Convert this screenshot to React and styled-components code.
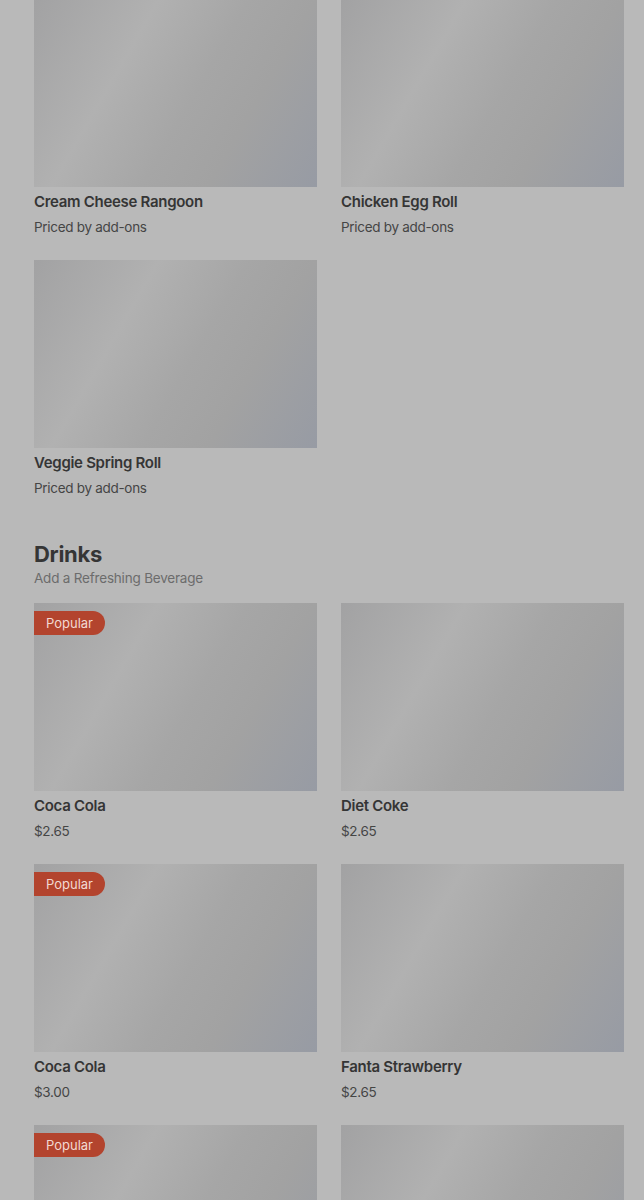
import React from "react";
import styled, { createGlobalStyle } from "styled-components";

const Global = createGlobalStyle`
  html, body { margin: 0; padding: 0; background: #b9b9b9; }
  body { font-family: Inter, "Noto Sans", "DejaVu Sans", sans-serif; -webkit-font-smoothing: antialiased; }
`;

const Page = styled.main`
  padding: 0 20px 0 34px;
  box-sizing: border-box;
  width: 644px;
  height: 1200px;
  overflow: hidden;
`;

const Section = styled.section`
  display: flex;
  flex-direction: column;
  margin-top: ${(p) => p.$top || 0}px;
`;

const SectionTitle = styled.h2`
  margin: 0;
  font-size: 22px;
  line-height: 28px;
  font-weight: 700;
  color: #353535;
  letter-spacing: -0.3px;
`;

const SectionSub = styled.p`
  margin: 0 0 15px;
  font-size: 13.5px;
  line-height: 20px;
  color: #6c6c6c;
  letter-spacing: -0.2px;
`;

const Grid = styled.div`
  display: grid;
  grid-template-columns: 283px 283px;
  column-gap: 24px;
  row-gap: 23px;
`;

const Card = styled.article`
  display: flex;
  flex-direction: column;
`;

const Thumb = styled.div`
  position: relative;
  height: 188px;
  background: linear-gradient(
    120deg,
    #a2a2a3 0%,
    #b1b1b1 32%,
    #a6a6a6 55%,
    #a2a2a2 72%,
    #979ba4 100%
  );
`;

const Badge = styled.span`
  position: absolute;
  top: 8px;
  left: 0;
  height: 24px;
  padding: 0 12px;
  display: flex;
  align-items: center;
  background: #b3442e;
  color: #f2d9d2;
  font-size: 13px;
  border-radius: 0 12px 12px 0;
`;

const Name = styled.h3`
  margin: 5px 0 0;
  font-size: 15px;
  line-height: 20px;
  font-weight: 600;
  color: #353535;
  letter-spacing: -0.3px;
`;

const Price = styled.p`
  margin: 5px 0 0;
  font-size: 13.5px;
  line-height: 20px;
  color: #454545;
  letter-spacing: -0.3px;
`;

const apps = [
  { name: "Cream Cheese Rangoon", price: "Priced by add-ons" },
  { name: "Chicken Egg Roll", price: "Priced by add-ons" },
  { name: "Veggie Spring Roll", price: "Priced by add-ons" },
];

const drinks = [
  { name: "Coca Cola", price: "$2.65", popular: true },
  { name: "Diet Coke", price: "$2.65" },
  { name: "Coca Cola", price: "$3.00", popular: true },
  { name: "Fanta Strawberry", price: "$2.65" },
  { name: "Sprite", price: "$2.65", popular: true },
  { name: "Dr Pepper", price: "$2.65" },
];

const Item = ({ item }) => (
  <Card>
    <Thumb>{item.popular && <Badge>Popular</Badge>}</Thumb>
    <Name>{item.name}</Name>
    <Price>{item.price}</Price>
  </Card>
);

export default function App() {
  return (
    <>
      <Global />
      <Page>
        <Section $top={-1}>
          <Grid>
            {apps.map((a, i) => (
              <Item key={i} item={a} />
            ))}
          </Grid>
        </Section>
        <Section $top={42}>
          <SectionTitle>Drinks</SectionTitle>
          <SectionSub>Add a Refreshing Beverage</SectionSub>
          <Grid>
            {drinks.map((d, i) => (
              <Item key={i} item={d} />
            ))}
          </Grid>
        </Section>
      </Page>
    </>
  );
}
